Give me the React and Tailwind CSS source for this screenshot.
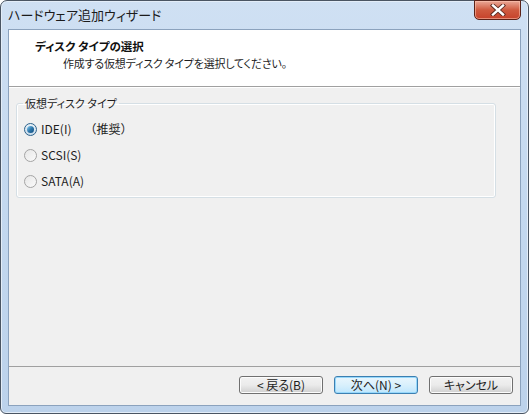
import React from "react";

const font = { fontFamily: '"Noto Sans CJK JP", "Noto Sans", sans-serif' };

function Radio({ checked, label, extra }) {
  return (
    <div className="flex items-center h-[16px]">
      <div
        className={
          "w-[13px] h-[13px] rounded-full border flex items-center justify-center " +
          (checked
            ? "border-[#2c628b] bg-gradient-to-b from-[#e8f1f8] to-[#c9dbea]"
            : "border-[#a4a4a4] bg-gradient-to-br from-[#e6e6e6] to-[#fbfbfb]")
        }
      >
        {checked && (
          <div className="w-[7px] h-[7px] rounded-full bg-gradient-to-br from-[#8ad2f5] via-[#2e78ac] to-[#0c4a7c]" />
        )}
      </div>
      <span className="ml-[4px] text-[12px] text-[#1e1e1e] leading-none [font-feature-settings:'palt']">{label}</span>
      {extra && <span className="ml-[13px] text-[12px] text-[#1e1e1e] leading-none">{extra}</span>}
    </div>
  );
}

function Btn({ children, def }) {
  return (
    <div
      className={
        "h-[18px] w-[84px] rounded-[3px] border flex items-center justify-center text-[12px] leading-none text-[#1e1e1e] " +
        (def
          ? "border-[#3c7fb1] bg-gradient-to-b from-[#eaf6fd] via-[#d9f0fc] to-[#bee6fd] shadow-[inset_0_0_0_1px_#97d8fb]"
          : "border-[#707070] bg-gradient-to-b from-[#f2f2f2] via-[#ebebeb] to-[#cfcfcf] shadow-[inset_0_0_0_1px_#fcfcfc]")
      }
    >
      {children}
    </div>
  );
}

export default function App() {
  return (
    <div className="w-[529px] h-[414px] bg-white" style={font}>
      <div className="w-full h-full rounded-t-[7px] rounded-b-[6px] border border-[#4a5563] bg-gradient-to-b from-[#cfe0f3] via-[#c3d8ef] to-[#bcd2eb] flex flex-col px-[7px] pb-[7px] shadow-[inset_0_0_0_1px_#e3edf8]">
        <div className="h-[28px] flex items-start justify-between">
          <div className="pt-[5px] text-[13px] leading-[17px] text-[#1b1b1b] [font-feature-settings:'palt']">
            ハードウェア追加ウィザード
          </div>
          <div className="mt-[-1px] w-[47px] h-[20px] rounded-b-[5px] border border-[#5b2218] bg-gradient-to-b from-[#e9a897] via-[#cf5a3f] to-[#c6412a] shadow-[inset_0_0_0_1px_rgba(255,200,180,0.55)] flex items-center justify-center">
            <svg width="16" height="12" viewBox="0 0 16 12">
              <path d="M3 1.5 L13 10.5 M13 1.5 L3 10.5" stroke="#5a2a20" strokeWidth="4.2" strokeLinecap="square" />
              <path d="M3 1.5 L13 10.5 M13 1.5 L3 10.5" stroke="#ffffff" strokeWidth="2.4" strokeLinecap="square" />
            </svg>
          </div>
        </div>
        <div className="flex-1 border border-[#8ba2bd] bg-[#f0f0f0] flex flex-col">
          <div className="h-[57px] bg-white border-b border-[#a0a0a0] [font-feature-settings:'palt']">
            <div className="pt-[8px] pl-[26px] text-[11.5px] leading-[16px] font-bold text-[#111]">
              ディスク タイプの選択
            </div>
            <div className="pt-[1px] pl-[54px] text-[11px] leading-[16px] text-[#1e1e1e] tracking-[-0.2px]">
              作成する仮想ディスク タイプを選択してください。
            </div>
          </div>
          <div className="flex-1 border-t border-white pt-[8px] px-[7px]">
            <fieldset className="w-[480px] h-[102px] border border-[#d5dfe5] rounded-[3px] shadow-[inset_0_0_0_1px_#ffffff]">
              <legend className="ml-[6px] px-[2px] text-[11px] leading-[14px] text-[#1e1e1e] [font-feature-settings:'palt']">
                仮想ディスク タイプ
              </legend>
              <div className="flex flex-col gap-[10px] pt-[11px] pl-[7px]">
                <Radio checked label="IDE(I)" extra="（推奨）" />
                <Radio label="SCSI(S)" />
                <Radio label="SATA(A)" />
              </div>
            </fieldset>
          </div>
          <div className="h-[39px] border-t border-[#a0a0a0] flex items-start justify-end pt-[9px] pr-[7px] gap-[11px] [font-feature-settings:'palt']">
            <Btn>&lt; 戻る(B)</Btn>
            <Btn def>次へ(N) &gt;</Btn>
            <Btn>キャンセル</Btn>
          </div>
        </div>
      </div>
    </div>
  );
}
